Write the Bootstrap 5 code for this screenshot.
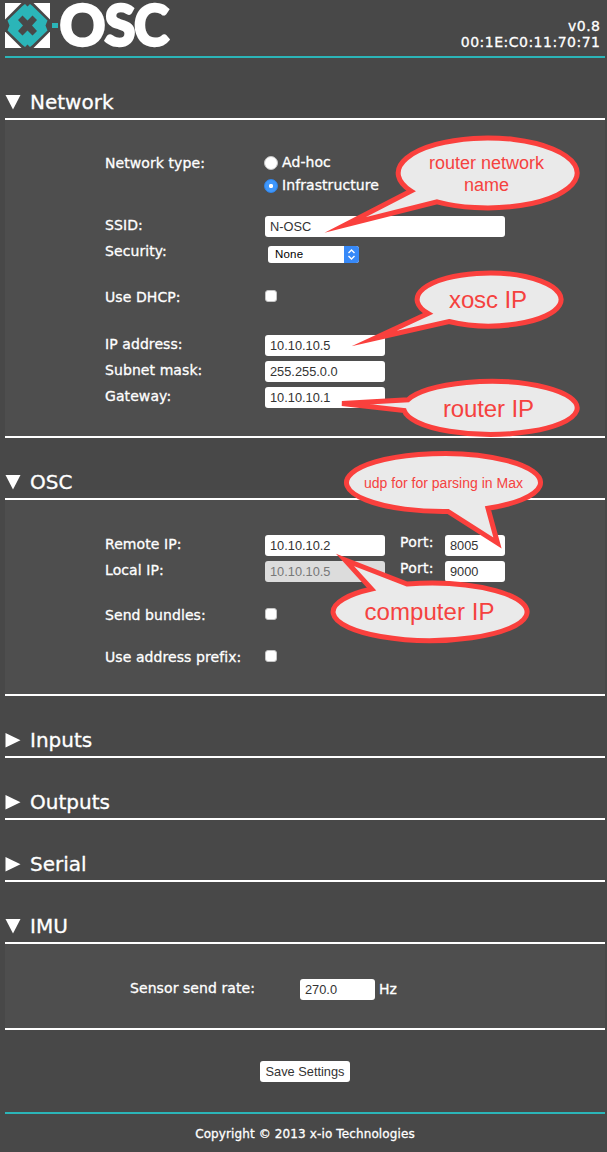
<!DOCTYPE html>
<html lang="en">
<head>
<meta charset="utf-8">
<meta name="viewport" content="width=device-width, initial-scale=1">
<title>x-OSC</title>
<link href="https://cdn.jsdelivr.net/npm/bootstrap@5.3.0/dist/css/bootstrap.min.css" rel="stylesheet">
<style>
  body { background: #484848; color: #fff; font: 14px/21px Verdana, "DejaVu Sans", sans-serif; letter-spacing: .08px; -webkit-text-stroke: .3px #fff; }
  .page { width: 600px; margin-left: 5px; height: 1152px; }
  .topbar { height: 58px; border-bottom: 2px solid #2bb5b8; line-height: 16px; }
  .topbar svg { letter-spacing: 0; overflow: visible; }
  .version { padding: 18px 4.5px 0 0; letter-spacing: .5px; }
  .section-title { height: 62px; border-bottom: 2px solid #fff; font-size: 20px; font-weight: 400; line-height: 24px; padding-top: 32px; gap: 9px; letter-spacing: 0; }
  .section-title svg { width: 16px; height: 15px; margin-top: 5px; fill: #fff; }
  .panel { background: #4e4e4e; border-bottom: 2px solid #fff; padding-left: 100px; }
  .panel-network { height: 318px; padding-top: 34px; }
  .panel-osc { height: 196px; padding-top: 35px; }
  .panel-imu { height: 86px; padding: 35px 0 0 125px; }
  .line { height: 21px; margin-bottom: 5px; }
  .name { width: 160px; margin-top: -1px; }
  .check-line .name { margin-top: 1px; }
  .panel-imu .name { width: 170px; }
  .port { width: 45px; margin: -3px 0 0 15px; letter-spacing: .25px; }
  .form-control { font: 12.8px/15px "Liberation Sans", Arial, sans-serif; letter-spacing: 0; -webkit-text-stroke: 0; color: #333; width: 120px; height: 21px; min-height: 0; padding: 3px 5px; border: 0; border-radius: 3px; background: #fff; }
  .form-control:disabled { background: #dcdcdc; color: #777; }
  .form-control.w-ssid { width: 240px; }
  .form-control.w-port { width: 60px; }
  .form-control.w-rate { width: 75px; }
  .form-check-input { margin: 0; border: 1px solid #c4c4c4; background-color: #fff; }
  .form-check-input[type=checkbox] { width: 12px; height: 12px; border-radius: 3px; margin-top: 4px; }
  .form-check-input[type=radio] { width: 14px; height: 14px; margin: 2px 0 0 -1px; }
  .form-check-input[type=radio]:checked { border-color: #2f86ef; background: radial-gradient(circle, #fff 0 1.8px, #3f97fb 2.5px); }
  .radio-line { height: 23px; gap: 4px; }
  .radio-line span { margin-top: -2px; }
  .picker { width: 91px; height: 17px; margin: 4px 0 0 3px; border-radius: 3px; background: #fff; color: #000; font: 11.5px/17px "Liberation Sans", Arial, sans-serif; letter-spacing: .2px; padding-left: 7px; -webkit-text-stroke: 0; }
  .picker svg { width: 15px; height: 17px; }
  .save { font: 12.8px/15px "Liberation Sans", Arial, sans-serif; color: #333; letter-spacing: 0; -webkit-text-stroke: 0; background: #fff; width: 90px; height: 21px; padding: 3px 0; border: 0; border-radius: 3px; margin-top: 31px; }
  .footer { border-top: 2px solid #2bb5b8; margin-top: 30px; padding-top: 10px; font-size: 12px; letter-spacing: .12px; }
  .notes { pointer-events: none; font-family: "Liberation Sans", Arial, sans-serif; fill: #f5423f; -webkit-text-stroke: 0; letter-spacing: 0; }
  .notes path { fill: #eaeaea; stroke: #fa403d; stroke-width: 5; stroke-miterlimit: 20; }
</style>
</head>
<body class="position-relative">
<div class="page">
  <header class="topbar d-flex justify-content-between">
    <svg width="166" height="56" viewBox="5 0 166 56" role="img" aria-label="x-OSC">
      <path d="M5 3h45v45H5z" fill="#fff"/>
      <path d="M21.500 3h12L50 19.500v12L33.500 48h-12L5 31.500v-12z" fill="#484848"/>
      <path d="M22.500 6L25 4 27.500 6.500 30 4 32.500 6 47.500 20.500 45.500 25.500 47.500 30.500 32.500 45 30 47 27.500 44.500 25 47 22.500 45 7.500 30.500 9.500 25.500 7.500 20.500z" fill="#2bb5b8"/>
      <path d="M22.500 15.500L27.500 20.500 32.500 15.500 37 20 32 25.500 37 31 32.500 35.500 27.500 30.500 22.500 35.500 18 31 23 25.500 18 20z" fill="#484848"/>
      <path d="M52 23h6v5h-6z" fill="#2bb5b8"/>
      <g font-family="Lato" font-weight="900" font-size="57" fill="#fff" stroke="#fff" stroke-width="2.500">
        <text x="59.500" y="46" textLength="46" lengthAdjust="spacingAndGlyphs">O</text>
        <text x="104.500" y="46" textLength="31" lengthAdjust="spacingAndGlyphs">S</text>
        <text x="134" y="46" textLength="35" lengthAdjust="spacingAndGlyphs">C</text>
      </g>
    </svg>
    <div class="version text-end">v0.8<br>00:1E:C0:11:70:71</div>
  </header>

  <h2 class="section-title d-flex m-0"><svg viewBox="0 0 16 15"><path d="M.5 0h15L8 14.500z"/></svg>Network</h2>
  <section class="panel panel-network">
    <div class="d-flex">
      <div class="name">Network type:</div>
      <div>
        <label class="radio-line d-flex"><input class="form-check-input" type="radio" name="nt"><span>Ad-hoc</span></label>
        <label class="radio-line d-flex"><input class="form-check-input" type="radio" name="nt" checked><span>Infrastructure</span></label>
      </div>
    </div>
    <div class="line d-flex" style="margin-top:16px"><div class="name">SSID:</div><input class="form-control w-ssid" value="N-OSC"></div>
    <div class="line d-flex"><div class="name">Security:</div>
      <div class="picker d-flex justify-content-between">None
        <svg viewBox="0 0 15 17"><path d="M0 0h12q3 0 3 3v11q0 3-3 3H0z" fill="#3789f8"/><path d="M4.500 7l3-3 3 3M4.500 10l3 3 3-3" fill="none" stroke="#fff" stroke-width="1.400"/></svg>
      </div>
    </div>
    <div class="line check-line d-flex" style="margin-top:23px"><div class="name">Use DHCP:</div><input class="form-check-input" type="checkbox"></div>
    <div class="line d-flex" style="margin-top:28px"><div class="name">IP address:</div><input class="form-control" value="10.10.10.5"></div>
    <div class="line d-flex"><div class="name">Subnet mask:</div><input class="form-control" value="255.255.0.0"></div>
    <div class="line d-flex"><div class="name">Gateway:</div><input class="form-control" value="10.10.10.1"></div>
  </section>

  <h2 class="section-title d-flex m-0"><svg viewBox="0 0 16 15"><path d="M.5 0h15L8 14.500z"/></svg>OSC</h2>
  <section class="panel panel-osc">
    <div class="line d-flex"><div class="name">Remote IP:</div><input class="form-control" value="10.10.10.2"><div class="port">Port:</div><input class="form-control w-port" value="8005"></div>
    <div class="line d-flex"><div class="name">Local IP:</div><input class="form-control" value="10.10.10.5" disabled><div class="port">Port:</div><input class="form-control w-port" value="9000"></div>
    <div class="line check-line d-flex" style="margin-top:22px"><div class="name">Send bundles:</div><input class="form-check-input" type="checkbox"></div>
    <div class="line check-line d-flex" style="margin-top:21px"><div class="name">Use address prefix:</div><input class="form-check-input" type="checkbox"></div>
  </section>

  <h2 class="section-title d-flex m-0"><svg viewBox="0 0 16 15"><path d="M.5 0v14.500L15.500 7.200z"/></svg>Inputs</h2>
  <h2 class="section-title d-flex m-0"><svg viewBox="0 0 16 15"><path d="M.5 0v14.500L15.500 7.200z"/></svg>Outputs</h2>
  <h2 class="section-title d-flex m-0"><svg viewBox="0 0 16 15"><path d="M.5 0v14.500L15.500 7.200z"/></svg>Serial</h2>
  <h2 class="section-title d-flex m-0"><svg viewBox="0 0 16 15"><path d="M.5 0h15L8 14.500z"/></svg>IMU</h2>
  <section class="panel panel-imu">
    <div class="line d-flex"><div class="name">Sensor send rate:</div><input class="form-control w-rate" value="270.0"><span class="ms-1">Hz</span></div>
  </section>

  <div class="d-flex justify-content-center"><button class="btn save">Save Settings</button></div>
  <footer class="footer text-center">Copyright © 2013 x-io Technologies</footer>
</div>

<!-- Speech-bubble annotations lying over the form -->
<svg class="notes position-absolute top-0 start-0" width="607" height="1152" viewBox="0 0 607 1152">
  <path d="M411 191A89.500 35 0 1 1 437 201.800L345 225z"/>
  <text x="429" y="169" font-size="18" textLength="115">router network</text>
  <text x="464" y="191" font-size="18" textLength="45">name</text>
  <path d="M428 313.500A72 26.500 0 1 1 449 321.500L374 338.500z"/>
  <text x="449" y="308" font-size="24" textLength="78">xosc IP</text>
  <path d="M408 399.700A86.700 26.500 0 1 1 404.200 410.500L342 403.500z" style="stroke-miterlimit:4"/>
  <text x="443" y="417" font-size="24" textLength="91">router IP</text>
  <path d="M448 511.500A97 29 0 1 1 488 508.300L497.500 543z"/>
  <text x="364" y="488" font-size="14" textLength="159">udp for for parsing in Max</text>
  <path d="M371.500 589A97 28.700 0 1 0 407 584L345 560z"/>
  <text x="364.500" y="620" font-size="24" textLength="130">computer IP</text>
</svg>
<script src="https://cdn.jsdelivr.net/npm/bootstrap@5.3.0/dist/js/bootstrap.bundle.min.js"></script>
</body>
</html>
